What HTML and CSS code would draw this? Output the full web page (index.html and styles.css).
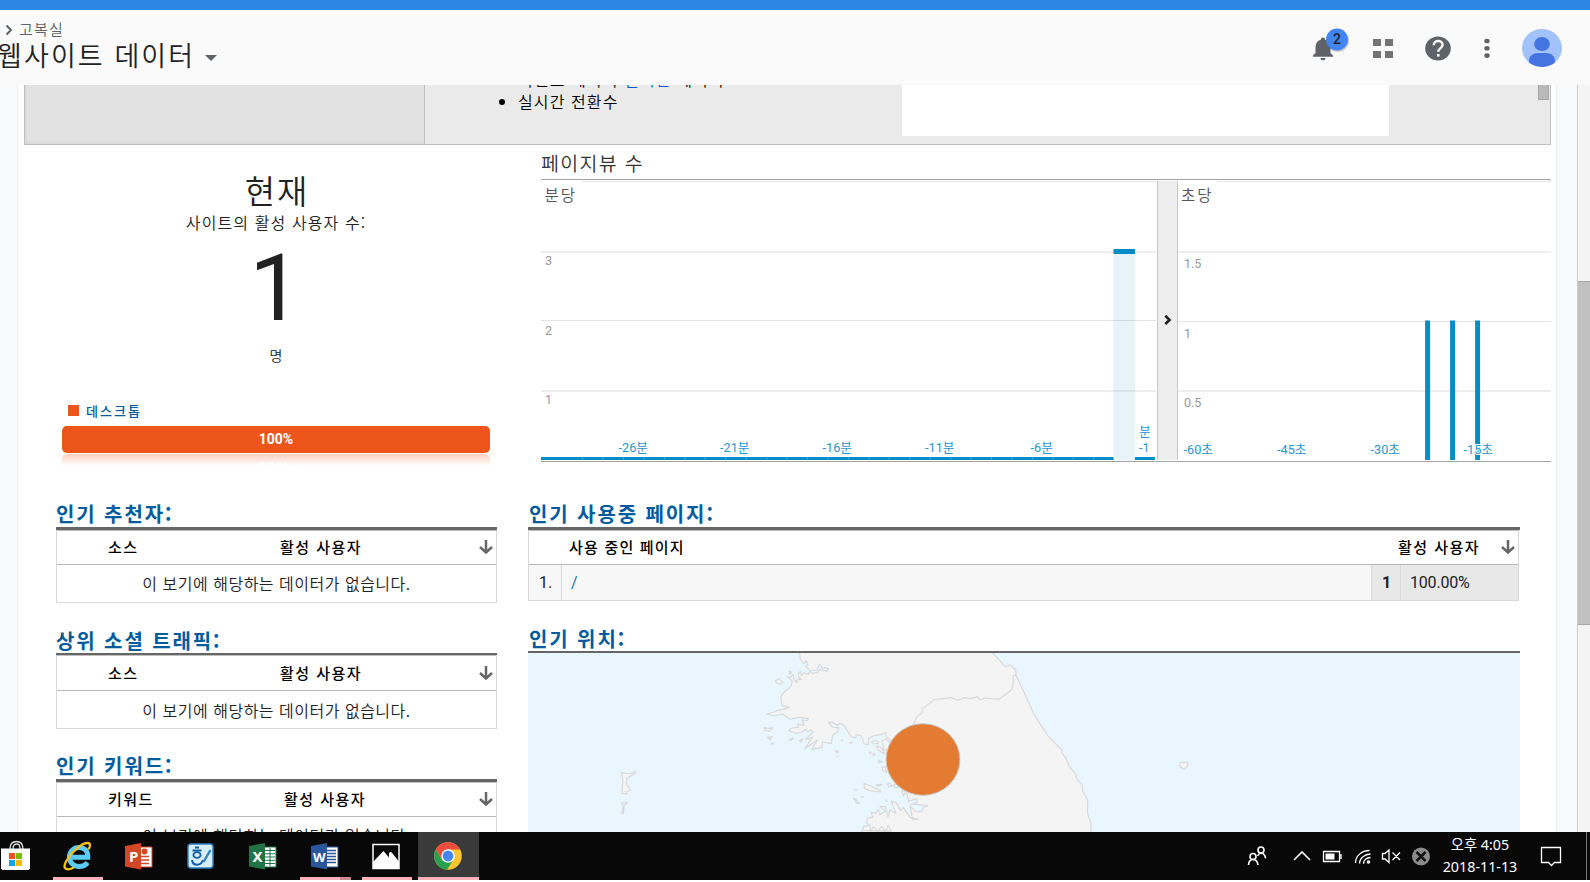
FILE: index.html
```html
<!DOCTYPE html>
<html lang="ko">
<head>
<meta charset="utf-8">
<title>웹사이트 데이터</title>
<link rel="stylesheet" href="styles.css">
</head>
<body>
<div class="accent"></div>
<header class="header">
  <div class="account">
    <div class="crumb"><svg width="8" height="12" viewBox="0 0 8 12"><path d="M1.5 1.5 6 6 1.5 10.500" fill="none" stroke="#5f6368" stroke-width="2"/></svg><span>고복실</span></div>
    <div class="view-name"><span>웹사이트 데이터</span><i class="caret"></i></div>
  </div>
  <svg class="header-icons" width="270" height="75" viewBox="1300 10 270 75">
    <path d="M1323 37.500c1.500 0 2.200 1 2.200 2.300 3.600 1 5.300 4 5.300 7.700v5.500l2.700 2.700v1h-20.400v-1l2.700-2.700v-5.500c0-3.700 1.700-6.700 5.300-7.700 0-1.300.7-2.300 2.200-2.300zM1320.500 58h5c0 1.400-1.100 2.300-2.500 2.300s-2.500-.9-2.500-2.300z" fill="#5f6368"/>
    <circle cx="1338" cy="41" r="11" fill="#000" opacity=".18"/>
    <circle cx="1337" cy="39.500" r="11" fill="#4285f4"/>
    <text x="1337" y="44.300" text-anchor="middle" class="badge-text">2</text>
    <path d="M1373 39h8v7h-8zM1385 39h8v7h-8zM1373 51h8v7h-8zM1385 51h8v7h-8z" fill="#747474"/>
    <ellipse cx="1438" cy="48.500" rx="12.800" ry="12" fill="#5f6368"/>
    <path d="M1433.700 45.200c0-5.600 8.900-5.600 8.900-.4 0 3.200-4.300 3.600-4.300 7" fill="none" stroke="#fafafa" stroke-width="2.400"/>
    <path d="M1437 54h2.600v2.600h-2.600z" fill="#fafafa"/>
    <ellipse cx="1487" cy="41" rx="2.700" ry="2.300" fill="#5f6368"/><ellipse cx="1487" cy="48.300" rx="2.700" ry="2.300" fill="#5f6368"/><ellipse cx="1487" cy="55.600" rx="2.700" ry="2.300" fill="#5f6368"/>
    <clipPath id="av"><ellipse cx="1542" cy="48" rx="20" ry="19"/></clipPath>
    <ellipse cx="1542" cy="48" rx="20" ry="19" fill="#a1c2fa"/>
    <g clip-path="url(#av)" fill="#4374e0"><ellipse cx="1542" cy="44" rx="7.800" ry="7"/><path d="M1529 61c0-5 4-8 9-8h8c5 0 9 3 9 8v2c-3 3-7 5-13 5s-10-2-13-5z"/></g>
  </svg>
</header>

<div class="viewport">
  <main class="page">
    <section class="intro">
      <div class="intro-side"></div>
      <div class="intro-body">
        <ul class="intro-list"><li>이벤트 페이지 <a>실시간</a> 데이터</li><li>실시간 전환수</li></ul>
        <div class="intro-video"></div>
        <div class="intro-scroll"></div>
      </div>
    </section>

    <section class="overview">
      <div class="now">
        <div class="now-title">현재</div>
        <div class="now-sub">사이트의 활성 사용자 수:</div>
        <div class="now-count">1</div>
        <div class="now-unit">명</div>
        <div class="legend"><i></i><span>데스크톱</span></div>
        <div class="share">100%</div>
        <div class="share-shadow"><span>100%</span></div>
      </div>
      <div class="pageviews">
        <h2>페이지뷰 수</h2>
        <svg width="1010" height="283" viewBox="541 179 1010 283">
          <path d="M541 179.500h1010" stroke="#a3a3a3"/>
          <path d="M581 181.500h575M1217 181.500h334" stroke="#e6e6e6"/>
          <path d="M541 252h615M1178 252h373M541 391h615M1178 391h373" stroke="#eee" stroke-width="2"/>
          <path d="M541 320.500h615M1178 321.500h373" stroke="#e4e4e4"/>
          <rect x="1157" y="181" width="21" height="279" fill="#ededed"/>
          <path d="M1157.500 181v279M1177.500 181v279" stroke="#c6c6c6"/>
          <path d="m1165.300 315.800 4.200 4.100-4.200 4.100" fill="none" stroke="#222" stroke-width="2.600"/>
          <rect x="1113.500" y="254" width="21.500" height="206" fill="#058dc7" opacity=".1"/>
          <path d="M1113.500 251.500h21.500" stroke="#058dc7" stroke-width="5"/>
          <path d="M541 458.500h572.500M1135 458.500h20" stroke="#058dc7" stroke-width="3"/>
          <path d="M582 458.500h530" stroke="#fff" stroke-opacity=".25" stroke-width="3" stroke-dasharray="1 19.450"/>
          <path d="M541 461.500h1010" stroke="#a3a3a3"/>
          <path d="M1427.600 320.500v139.500M1452.600 320.500v139.500M1477.600 320.500v139.500" stroke="#058dc7" stroke-width="5"/>
          <g class="unit"><text x="544.500" y="201">분당</text><text x="1181" y="201">초당</text></g>
          <g class="ylab">
            <text x="545" y="265">3</text><text x="545" y="335">2</text><text x="545" y="404">1</text>
            <text x="1184" y="268">1.5</text><text x="1184" y="338">1</text><text x="1184" y="407">0.5</text>
          </g>
          <g class="xlab">
            <text x="618.500" y="452">-26분</text><text x="720" y="452">-21분</text><text x="822.500" y="452">-16분</text><text x="925" y="452">-11분</text><text x="1030.500" y="452">-6분</text>
            <text x="1139" y="436">분</text><text x="1139" y="452">-1</text>
            <text x="1183.500" y="454">-60초</text><text x="1277" y="454">-45초</text><text x="1370.500" y="454">-30초</text><text x="1463.500" y="454">-15초</text>
          </g>
        </svg>
      </div>
    </section>

    <section class="reports">
      <div class="col-left">
        <article class="report">
          <h3>인기 추천자:</h3>
          <div class="table"><div class="thead"><span class="dim">소스</span><span class="metric">활성 사용자</span><svg class="sort" width="14" height="14" viewBox="0 0 14 14"><path d="M7 0v12M1 7l6 5.500L13 7"/></svg></div><div class="empty">이 보기에 해당하는 데이터가 없습니다.</div></div>
        </article>
        <article class="report second">
          <h3>상위 소셜 트래픽:</h3>
          <div class="table"><div class="thead"><span class="dim">소스</span><span class="metric">활성 사용자</span><svg class="sort" width="14" height="14" viewBox="0 0 14 14"><path d="M7 0v12M1 7l6 5.500L13 7"/></svg></div><div class="empty">이 보기에 해당하는 데이터가 없습니다.</div></div>
        </article>
        <article class="report">
          <h3>인기 키워드:</h3>
          <div class="table"><div class="thead"><span class="dim">키워드</span><span class="metric shifted">활성 사용자</span><svg class="sort" width="14" height="14" viewBox="0 0 14 14"><path d="M7 0v12M1 7l6 5.500L13 7"/></svg></div><div class="empty">이 보기에 해당하는 데이터가 없습니다.</div></div>
        </article>
      </div>
      <div class="col-right">
        <article class="report pages">
          <h3>인기 사용중 페이지:</h3>
          <div class="table">
            <div class="thead"><span class="page-head">사용 중인 페이지</span><span class="count-head">활성 사용자</span><svg class="sort" width="14" height="14" viewBox="0 0 14 14"><path d="M7 0v12M1 7l6 5.500L13 7"/></svg></div>
            <div class="row"><span class="idx">1.</span><a class="path">/</a><b class="num">1</b><span class="pct">100.00%</span></div>
          </div>
        </article>
        <article class="report places">
          <h3>인기 위치:</h3>
          <svg class="map" width="992" height="179" viewBox="528 653 992 179">
            <rect x="528" y="653" width="992" height="179" fill="#e9f6fe"/>
            <g transform="translate(730 640) scale(.33333)" fill="#f4f4f4" stroke="#d9d9d9" stroke-width="3.500" stroke-linejoin="round">
              <path d="M207 30 212 60 222 72 228 62 234 72 228 80 240 92 262 90 268 72 276 82 296 86 290 94 270 88 262 98 246 100 240 94 234 104 222 98 214 106 212 94 206 98 206 112 214 118 204 118 200 128 192 118 190 104 182 112 172 110 186 122 184 136 174 148 166 152 152 170 156 196 166 200 178 202 160 208 148 210 132 216 110 222 134 228 158 222 180 238 206 232 236 236 232 242 216 240 222 256 204 252 206 262 186 264 176 272 196 280 216 276 228 268 234 276 242 268 250 276 226 298 248 292 224 326 262 300 246 328 276 322 278 306 304 310 308 286 322 276 326 262 308 262 296 248 306 246 322 256 330 250 342 256 364 290 378 294 378 284 392 286 398 298 402 312 414 314 416 296 428 288 452 284 466 278 470 290 482 302 472 320 478 380 500 430 530 460 536 484 560 476 562 488 544 492 568 494 594 498 580 502 574 516 556 514 540 496 548 538 564 538 540 532 520 502 512 512 498 488 484 484 490 500 498 520 480 510 474 530 466 500 450 500 466 514 450 524 444 508 438 520 424 518 428 532 412 534 410 550 420 556 406 562 392 580H1083L1083 550 1073 522 1073 480 1058 454 1057 436 1040 416 1038 404 1016 376 1008 354 996 340 996 330 954 288 910 220 904 204 858 106 857 90 840 74 826 80 804 56 780 30z"/>
              <path d="M858 104 850 108 849 138 842 152 806 178 764 174 750 180 742 170 722 176 702 173 684 181 664 173 612 179 578 206 576 218 560 232 552 250 536 266" fill="none"/>
              <path d="M136 122 148 116 158 128 150 132 140 130zM102 262 116 266 128 262 126 268 116 274 104 270zM178 92 186 98 178 102zM112 292 126 290 120 300zM124 310 132 310 126 314zM178 300 190 294 182 302zM208 302 218 296 214 306zM316 332 326 334 320 338zM322 348 326 348zM334 302 338 300zM358 310 366 308zM424 306 440 300 446 310 430 312zM456 302 468 296 480 310 478 334 462 328zM440 318 456 324 464 342 444 330zM418 336 424 336 420 342zM428 342 436 342 432 346zM446 360 458 366 446 368zM456 382 466 380 470 398 458 390zM402 430 422 438 450 450 452 456 420 452 404 446zM438 434 456 434 446 438zM472 432 480 430 486 438 476 440zM490 436 500 430 510 438 498 444zM374 450 382 450zM394 472 400 470zM370 474 378 478 388 490 380 490 376 482zM466 480 472 484zM516 452 528 454 520 468zM398 572 400 560 420 556 422 574 430 560 444 574 454 560 468 574 474 556 484 574zM1349 368 1373 366 1373 378 1362 388 1350 380z"/>
              <path d="M-325 398-300 402-284 394-284 400-308 414-312 430-298 450-312 456-310 462-324 460-322 420zM-324 490-308 486-318 500-320 520-324 520-320 498z"/>
            </g>
            <ellipse cx="923" cy="759.500" rx="36.900" ry="35.800" fill="#e47b33" stroke="#c4c4c4"/>
          </svg>
        </article>
      </div>
    </section>
  </main>
  <div class="scrollbar"><div class="thumb"></div></div>
</div>

<footer class="taskbar">
  <svg width="500" height="48" viewBox="0 832 500 48">
    <rect x="418" y="832" width="61" height="48" fill="#3a3a3a"/>
    <path d="M10 849c0-7 4-7.500 6.500-7.500s6.500.5 6.500 7.500M13 849c0-4 2-5 4-5s3 1 3 5" fill="none" stroke="#ddd" stroke-width="1.300"/>
    <path d="M1 848.500h29v20l-1.500 1.500h-26L1 868.500z" fill="#fff"/>
    <path d="M9 853h6v6H9z" fill="#f25022"/><path d="M16 853h6v6h-6z" fill="#7fba00"/><path d="M9 860h6v6H9z" fill="#00a4ef"/><path d="M16 860h6v6h-6z" fill="#ffb900"/>
    <path d="M87.500 862.500c-2 3-5 4-8.500 4-5.500 0-9.500-4-9.500-9.500s4-9.500 9.500-9.500c6 0 9 4 8.800 9.800H71" fill="none" stroke="#5ccbf7" stroke-width="5"/>
    <path d="M74 867.500c-7 3.500-12 2-8-6 5-9 15-18 21-18.500 4-.3 3.500 3 1.500 6.500" fill="none" stroke="#f4c020" stroke-width="2.300"/>
    <path d="M140 847h12v20h-12z" fill="#fff" stroke="#d24726"/><path d="M141 856.500h8M141 860h8M141 863.500h8" stroke="#d24726" stroke-width="1.500"/><circle cx="144.500" cy="851.500" r="3" fill="#d24726"/>
    <path d="m125 846 16-3v26.500l-16-3z" fill="#d24726"/><text x="129" y="861.500" class="app">P</text>
    <rect x="188" y="844" width="25" height="24" rx="3" fill="#d9edf8" stroke="#2c83c3" stroke-width="1.500"/>
    <path d="M192.500 850.500h9M195 847.500h4" fill="none" stroke="#155f9f" stroke-width="1.800"/><ellipse cx="197" cy="855" rx="3.600" ry="2.800" fill="none" stroke="#155f9f" stroke-width="1.800"/><path d="M192 860c1 6.500 9 6 11 0" fill="none" stroke="#155f9f" stroke-width="2"/><path d="m203.500 862 7-12" stroke="#2c83c3" stroke-width="2.400"/>
    <path d="M264 847h12v20h-12z" fill="#fff" stroke="#217346"/><path d="M265 850.500h10M265 853.800h10M265 857h10M265 860.300h10M265 863.500h10M270 848v18" stroke="#217346"/>
    <path d="m249 846 16-3v26.500l-16-3z" fill="#217346"/><text x="252.500" y="861.500" class="app">X</text>
    <path d="M326 847h12v20h-12z" fill="#fff" stroke="#2b579a"/><path d="M327 850.500h9M327 853.500h9M327 856.500h9M327 859.500h9M327 862.500h9" stroke="#2b579a" stroke-width="1.300"/>
    <path d="m311 846 16-3v26.500l-16-3z" fill="#2b579a"/><text x="313" y="861.500" class="app w">W</text>
    <rect x="373" y="844.500" width="26" height="24" fill="#080808" stroke="#fff" stroke-width="1.500"/><path d="m373 862 10.500-11 5.500 6.500v-3c0-3 2-3 3.500-1l6.500 8v7h-26z" fill="#fff"/>
    <g transform="translate(448 856)"><circle r="13.800" fill="#fbc634"/><path d="M-12.200-6.500A13.800 13.800 0 0 1 12.200-6.500H0L-6 3.500z" fill="#ea4d3d"/><path d="M-12.200-6.500A13.800 13.800 0 0 0-1 13.800L5.500 3.500H-6z" fill="#2ba04f"/><circle r="6.800" fill="#fff"/><circle r="5.400" fill="#4587f3"/></g>
    <path d="M53 878.500h50M300 878.500h40M362 878.500h50M418 878.500h61" stroke="#ffb0b8" stroke-width="3"/><path d="M340 878.500h11" stroke="#c98c93" stroke-width="3"/>
  </svg>
  <div class="tray">
    <svg width="190" height="48" viewBox="1245 832 190 48">
      <g fill="none" stroke="#fff" stroke-width="1.600"><circle cx="1261" cy="850" r="3"/><circle cx="1253" cy="856.500" r="3"/><path d="M1248.500 865c.3-4 2-5.500 4.500-5.500s4.500 1.500 5 5.500M1257.500 856c1-2 2-2.700 3.500-2.700 2.500 0 4 1.500 4.600 5M1294 860l8-8 8 8"/><path d="M1323.500 851.500h16v10h-16zM1341 854v5" stroke-width="1.300"/><path d="M1355.500 863c0-7 6-12.500 14-12.500M1359.500 863.500c0-5 5-9.500 11-9.500M1363.500 863.800c0-3.500 3-6.300 7-6.300" stroke-width="1.300"/><path d="M1382.500 853.500h2.500l4-3.500v12.500l-4-3.500h-2.500zM1392.500 852.500l7.500 7.500M1400 852.500l-7.500 7.500" stroke-width="1.300"/></g>
      <path d="M1325.500 853.500h9v6h-9z" fill="#fff"/><circle cx="1368.500" cy="862" r="1.800" fill="#fff"/>
      <circle cx="1421" cy="856.500" r="9" fill="#8c8c8c"/><path d="m1416.500 852 9 9M1425.500 852l-9 9" stroke="#111" stroke-width="2.500"/>
    </svg>
    <div class="clock"><span>오후 4:05</span><span>2018-11-13</span></div>
    <svg class="action" width="50" height="48" viewBox="1538 832 50 48"><path d="M1541.500 847.500h19v15h-6l-3 3-3-3h-7z" fill="none" stroke="#fff" stroke-width="1.300"/><path d="M1586.500 832v48" stroke="#777"/></svg>
  </div>
</footer>
</body>
</html>
```
FILE: styles.css
```css
* { box-sizing: border-box; }
body {
  margin: 0;
  width: 1590px;
  height: 882px;
  display: flex;
  flex-direction: column;
  overflow: hidden;
  background: #fff;
  color: #222;
  font-family: "Noto Sans CJK KR", "Noto Sans", sans-serif;
  font-weight: 350;
}
svg { display: block; flex: none; }
h2, h3 { margin: 0; font-weight: 350; }
.accent { height: 10px; background: #2d86e2; flex: none; }

/* header */
.header {
  flex: none;
  height: 75px;
  display: flex;
  justify-content: space-between;
  background: #fafafa;
  padding-right: 20px;
}
.account { padding-top: 9px; white-space: nowrap; }
.crumb {
  display: flex;
  align-items: center;
  gap: 6px;
  height: 20px;
  padding-left: 5px;
  font-size: 15px;
  line-height: 20px;
  letter-spacing: 1.2px;
  color: #5f6368;
}
.crumb svg { margin-top: 2px; }
.view-name {
  display: flex;
  align-items: center;
  height: 31px;
  margin-left: -3px;
  font-size: 27px;
  line-height: 29px;
  letter-spacing: 2.1px;
}
.caret {
  margin: 6px 0 0 10px;
  border: 6px solid transparent;
  border-top-color: #5f6368;
  border-bottom: 0;
}
.badge-text { font: 500 14px Roboto, sans-serif; fill: #222; }

/* scrolling area */
.viewport {
  flex: none;
  height: 747px;
  display: flex;
  justify-content: space-between;
  overflow: hidden;
  background: #f8f9fb;
  padding-left: 17px;
}
.page {
  width: 1540px;
  height: 747px;
  overflow: hidden;
  background: #fff;
  border: solid #eceef0;
  border-width: 0 1px;
  padding-left: 6px;
}
.scrollbar { width: 13px; background: #f4f4f4; border-left: 1px solid #ccc; padding-top: 196px; }
.thumb { height: 344px; background: #c1c1c1; border: solid #a8a8a8; border-width: 1px 0; }

.intro {
  display: flex;
  width: 1527px;
  height: 60px;
  border: 1px solid #c0c0c0;
  border-top: 0;
}
.intro-side {
  width: 400px;
  background: #e2e2e2;
  border-right: 1px solid #c0c0c0;
  box-shadow: inset 2px -2px 2px rgba(0,0,0,.04);
}
.intro-body { flex: 1; display: flex; background: #eaeaea; overflow: hidden; }
.intro-list {
  width: 477px;
  margin: -17px 0 0;
  padding: 0 0 0 93px;
  font-size: 16px;
  line-height: 22px;
  letter-spacing: 1.1px;
  color: #000;
}
.intro-list li:first-child { line-height: 22px; height: 22px; }
.intro-list a { color: #15c; }
.intro-video { width: 487px; height: 51px; background: #fff; }
.intro-scroll { width: 11px; height: 15px; margin-left: 149px; background: #bababa; border: 1px solid #a6a6a6; border-top: 0; }

/* overview */
.overview { display: flex; height: 355px; }
.now { width: 517px; padding-left: 38px; display: flex; flex-direction: column; }
.now > * { width: 428px; text-align: center; }
.now-title { margin-top: 24px; height: 42px; font-size: 33px; line-height: 42px; letter-spacing: 2px; padding-left: 2px; }
.now-sub { height: 26px; font-size: 16px; line-height: 22px; letter-spacing: 1.1px; }
.now-count { height: 104px; font: 93px/104px Roboto, sans-serif; padding-right: 1px; }
.now-unit { height: 24px; margin-top: 3px; font-size: 14px; line-height: 22px; }
.now > .legend {
  display: flex;
  align-items: center;
  gap: 7px;
  height: 20px;
  margin-top: 32px;
  padding-left: 6px;
  font-size: 13px;
  font-weight: 500;
  letter-spacing: 2px;
  color: #005c9c;
}
.legend i { width: 11px; height: 11px; background: #ed561b; }
.share {
  height: 27px;
  margin-top: 6px;
  border-radius: 5px;
  background: #ed561b;
  color: #fff;
  font: 700 14px/27px Roboto, "Noto Sans", sans-serif;
}
.share-shadow {
  height: 12px;
  margin-top: 1px;
  overflow: hidden;
  border-radius: 5px 5px 0 0;
  background: linear-gradient(#fbd0c0, #fff);
  color: #fff;
  font: 700 14px/14px Roboto, sans-serif;
}
.share-shadow span { display: block; padding-top: 7px; }
.pageviews { width: 1010px; }
.pageviews h2 { height: 34px; font-size: 19.500px; line-height: 35px; letter-spacing: 1.300px; color: #333; }
.unit { font-size: 15.500px; letter-spacing: 2px; fill: #555; }
.ylab { font: 12.500px Roboto, sans-serif; fill: #999; }
.xlab { font: 12.700px Roboto, "Noto Sans CJK KR", sans-serif; fill: #2a94cc; stroke: #fff; stroke-width: 2px; paint-order: stroke; }

/* reports */
.reports { display: flex; padding-left: 32px; }
.col-left { width: 441px; margin-right: 31px; }
.col-right { width: 992px; }
.report { height: 126px; }
.report h3 {
  height: 30px;
  border-bottom: 3px solid #666;
  font-size: 20px;
  line-height: 28px;
  font-weight: 700;
  letter-spacing: 1.900px;
  color: #005c9c;
  white-space: nowrap;
}
.report.second h3 { border-bottom-width: 2px; height: 29px; line-height: 30px; }
.report.second .empty { height: 38px; line-height: 38px; }
.table { border: 1px solid #d8d8d8; border-top-color: #c0c0c0; }
.thead {
  display: flex;
  align-items: center;
  height: 34px;
  border-bottom: 1px solid #b8b8b8;
  color: #000;
  font-size: 15px;
  line-height: 20px;
  font-weight: 500;
  letter-spacing: 1.450px;
  padding: 0 3px 1px 0;
}
.second .thead { height: 35px; }
.second .empty { margin-bottom: -1px; }
.dim { width: 223px; padding-left: 51px; }
.metric { flex: 1; }
.metric.shifted { padding-left: 4px; }
.sort { fill: none; stroke: #666; stroke-width: 2.500px; }
.empty { height: 37px; text-align: center; font-size: 16px; line-height: 36px; letter-spacing: .5px; }
.report.pages { height: 125px; }
.col-right h3 { padding-left: 1px; }
.pages .table { margin-right: 1px; }
.page-head { flex: 1; padding-left: 40px; letter-spacing: 1.200px; }
.count-head { margin-right: 21px; }
.row { display: flex; height: 35px; background: #f7f7f7; font: 16px/35px Roboto, sans-serif; }
.idx { width: 33px; padding-left: 10px; border-right: 1px solid #d8d8d8; }
.path { flex: 1; padding-left: 9px; color: #1a73b8; }
.num { width: 29px; padding-left: 10px; background: #e8e8e8; border-left: 1px solid #d8d8d8; }
.pct { width: 118px; padding-left: 9px; background: #e8e8e8; border-left: 1px solid #d8d8d8; letter-spacing: -.2px; }
.report.places h3 { height: 28px; border-bottom-width: 2px; line-height: 28px; }

/* taskbar */
.taskbar { flex: none; height: 48px; display: flex; justify-content: space-between; background: #080808; }
.tray { display: flex; color: #fff; }
.app { font: 700 15px "Noto Sans", sans-serif; fill: #fff; }
.app.w { font-size: 13px; }
.clock {
  width: 90px;
  display: flex;
  flex-direction: column;
  align-items: center;
  font: 14.300px/22px "Noto Sans", "Noto Sans CJK KR", sans-serif;
  padding-top: 2px;
  white-space: nowrap;
}
.action { margin: 0 2px 0 13px; }
```
